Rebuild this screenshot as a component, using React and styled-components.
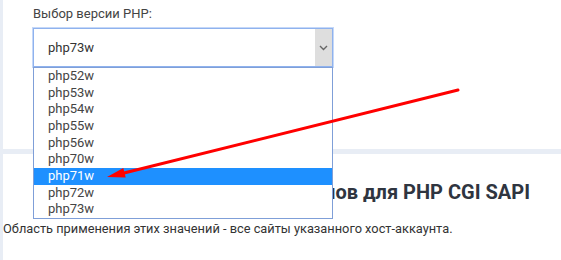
import React from 'react';
import styled, { createGlobalStyle } from 'styled-components';

const GlobalStyle = createGlobalStyle`
    html, body {
        margin: 0;
        padding: 0;
        background: #e8edf5;
        font-family: Roboto, "Liberation Sans", Arial, sans-serif;
    }
`;

const versions = ['php52w', 'php53w', 'php54w', 'php55w', 'php56w', 'php70w', 'php71w', 'php72w', 'php73w'];

const Page = styled.div`
    position: relative;
    width: 561px;
    height: 260px;
    overflow: hidden;
    padding-left: 3px;
    box-sizing: border-box;
    display: flex;
    flex-direction: column;
    gap: 5px;
`;

const Card = styled.section`
    background: #fff;
    height: ${props => props.height || 'auto'};
    flex: ${props => (props.grow ? '1 0 auto' : '0 0 auto')};
    box-sizing: border-box;
    padding: ${props => props.pad};
`;

const Label = styled.div`
    font-size: 13px;
    line-height: 16px;
    color: #444;
    margin-bottom: 6px;
`;

const SelectWrap = styled.div`
    position: relative;
    width: 300px;
`;

const SelectBox = styled.div`
    height: 39px;
    box-sizing: border-box;
    border: 1px solid #8fb2ee;
    box-shadow: 0 0 0 1px #c5d8f8;
    display: flex;
    align-items: stretch;
    background: #fff;
`;

const SelectValue = styled.span`
    flex: 1;
    display: flex;
    align-items: center;
    padding-left: 14px;
    font-size: 13px;
    color: #333;
`;

const Caret = styled.span`
    width: 17px;
    background: #dedede;
    display: flex;
    align-items: center;
    justify-content: center;
`;

const Options = styled.ul`
    position: absolute;
    top: 39px;
    left: 0;
    right: 0;
    margin: 0;
    padding: 0;
    list-style: none;
    background: #fff;
    border: 1px solid #7f9fd8;
    z-index: 2;
`;

const Option = styled.li`
    height: 16.67px;
    line-height: 16.67px;
    padding-left: 14px;
    font-size: 13px;
    color: ${props => (props.active ? '#fff' : '#444')};
    background: ${props => (props.active ? '#1e90ff' : 'transparent')};
`;

const Heading = styled.h2`
    margin: 0;
    padding-right: 31px;
    text-align: right;
    font-size: 20px;
    line-height: 24px;
    font-weight: 700;
    color: #2f3540;
    white-space: nowrap;
`;

const Text = styled.p`
    margin: 17px 0 0;
    font-size: 12.8px;
    line-height: 16px;
    color: #333;
`;

const Pointer = styled.svg`
    position: absolute;
    left: 0;
    top: 0;
    z-index: 3;
    pointer-events: none;
`;

const App = () => (
    <Page>
        <GlobalStyle />
        <Card height="149px" pad="6px 0 0 30px">
            <Label>Выбор версии PHP:</Label>
            <SelectWrap>
                <SelectBox>
                    <SelectValue>php73w</SelectValue>
                    <Caret>
                        <svg width="9" height="6" viewBox="0 0 9 6">
                            <polyline points="1,1 4.5,4.5 8,1" fill="none" stroke="#666" strokeWidth="1.4" />
                        </svg>
                    </Caret>
                </SelectBox>
                <Options>
                    {versions.map(v => (
                        <Option key={v} active={v === 'php71w'}>
                            {v}
                        </Option>
                    ))}
                </Options>
            </SelectWrap>
        </Card>
        <Card grow pad="26px 0 0 0">
            <Heading>Задание значений php.ini файлов для PHP CGI SAPI</Heading>
            <Text>Область применения этих значений - все сайты указанного хост-аккаунта.</Text>
        </Card>
        <Pointer width="561" height="260" viewBox="0 0 561 260">
            <line x1="458" y1="90" x2="122" y2="173.5" stroke="#ff0000" strokeWidth="3" strokeLinecap="round" />
            <polygon points="107,177 125.7,177.6 123.3,167.9" fill="#ff0000" />
        </Pointer>
    </Page>
);

export default App;
